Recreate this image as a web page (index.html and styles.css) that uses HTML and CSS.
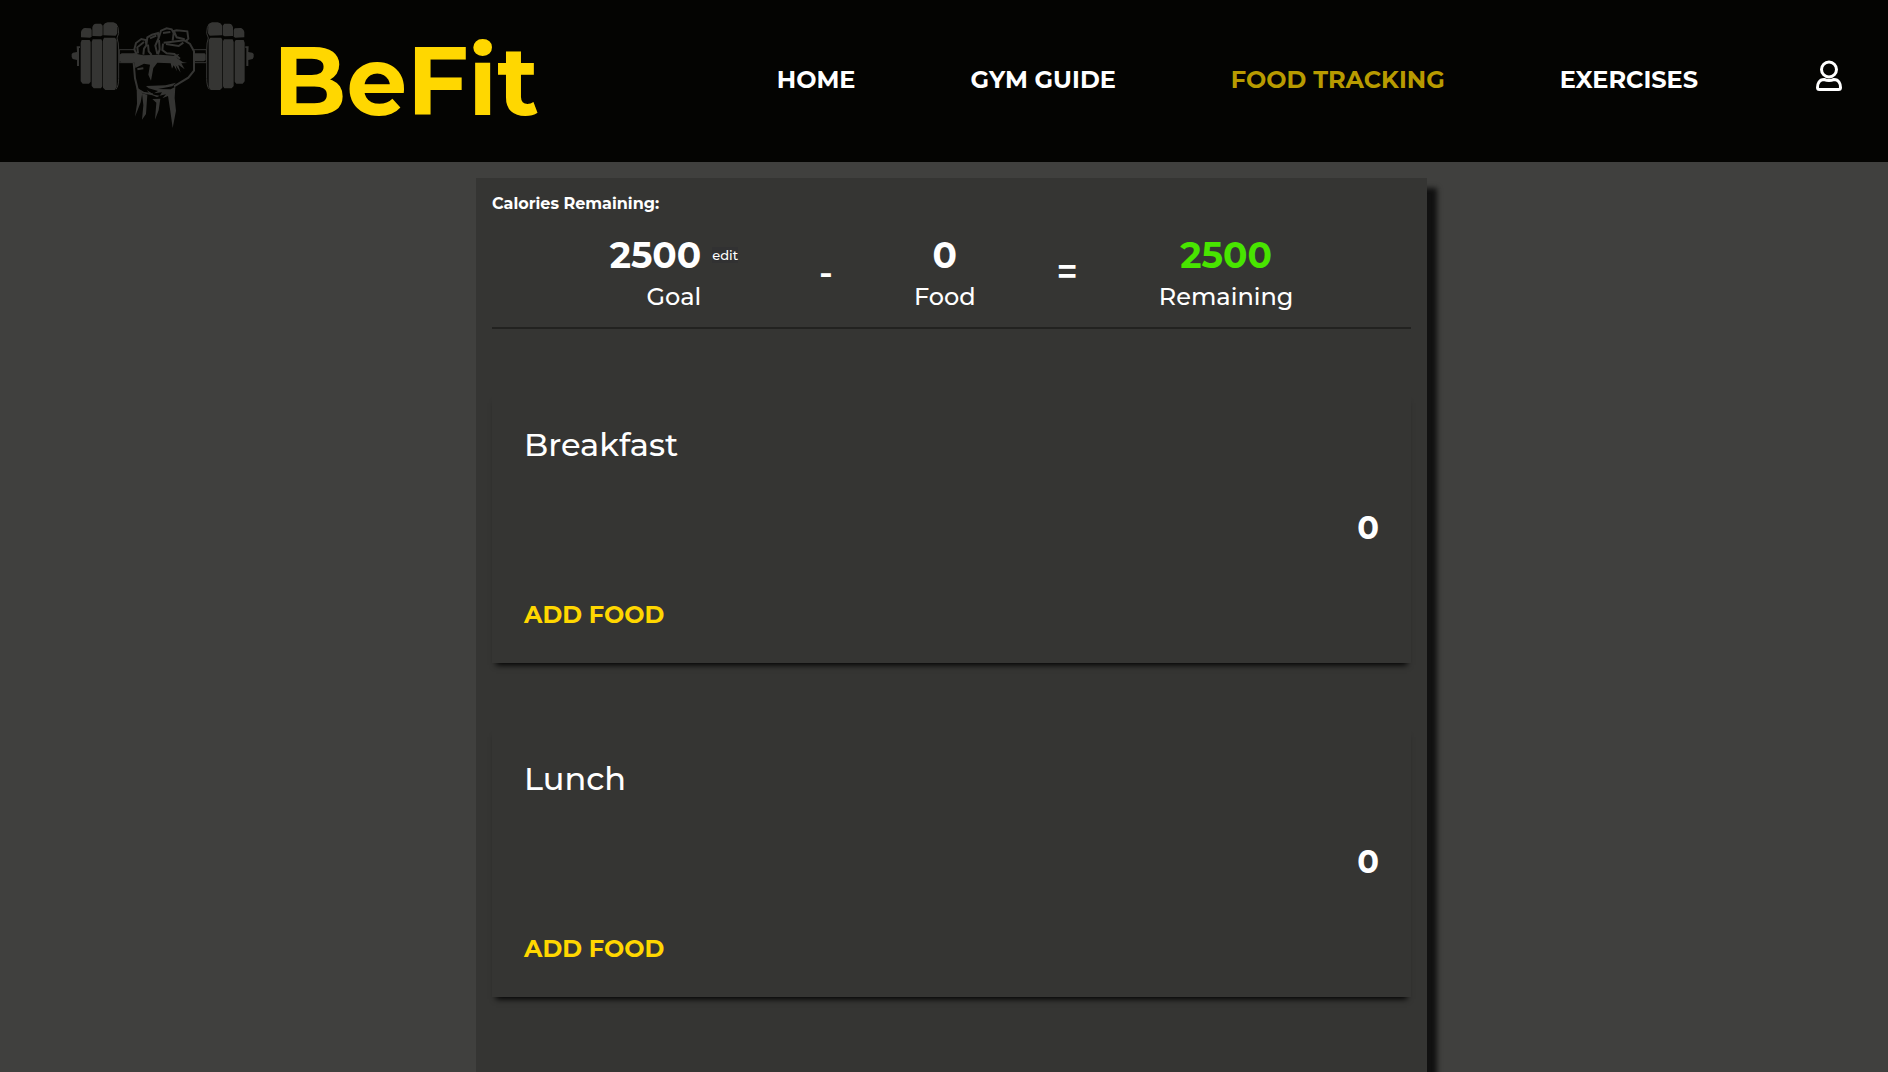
FILE: index.html
```html
<!DOCTYPE html>
<html lang="en">
<head>
<meta charset="utf-8">
<title>BeFit - Food Tracking</title>
<link rel="stylesheet" href="styles.css">
</head>
<body>
<header class="site-header">
  <a class="brand" href="#">
    <svg class="brand-mark" viewBox="0 0 600 375" aria-hidden="true">
      <defs>
        <g id="plates">
          <path d="M63 82V66Q66 55 75 54L92 55L95 60V80L90 83ZM97 78V52Q99 42 108 41H123L128 47V76L122 79ZM130 76V46Q133 38 143 37H160Q168 39 171 46L172 70L167 77Z"/>
          <path d="M65 90H89L92 96V215L87 221H68L62 214V98ZM98 88H124L127 94V229L123 235H101L95 228V96ZM132 83H165L170 90V231L164 240H136L129 233V90Z"/>
          <path class="thin" d="M168 41Q176 50 176 70L171 84Q176 96 176 120V205Q176 228 168 238"/>
          <path d="M50 109H60V114H57V168H51V150L38 147L35 141V132L39 128L51 126Z"/>
        </g>
      </defs>
      <use href="#plates"/>
      <use href="#plates" transform="matrix(-1 0 0 1 616 0)"/>
      <path class="thin" d="M178 119H226M402 119H439M178 119V158M439 119V158M402 158H439M178 158H220"/>
      <path d="M178 134L185 130H228V158H185L178 152ZM402 130H434L437 134V150L432 154H402Z"/>
      <path d="M220 130L250 136L300 134L340 137L358 131L350 143L368 156L382 159L364 160L374 178L355 164L362 188L347 166L351 184L341 166L336 176L332 160L292 158L280 174L273 212L265 194L270 164L252 161L226 174Z"/>
      <path class="line" d="M230 134L223 118L228 99L244 87L257 90L259 106L252 116L250 134M234 130L232 112L252 96M259 106L262 82L276 74L294 69L296 84L286 107L292 132M264 104L266 124L275 135M270 85L289 77M296 84L303 62L320 55L335 58L341 69L338 92M297 90L299 118L294 133M309 69L331 66M338 64L350 61L382 64L385 86L378 93M343 66L350 82L374 88"/>
      <path class="line" d="M311 98L338 95L373 91L390 102L402 124V182L385 203L342 229M309 101L307 120L320 130L343 132L360 146M318 102L356 108L370 98M221 158L225 205L233 238L250 248L278 253M232 178L250 175"/>
      <path d="M258 228L316 226L348 218L337 229L294 237L332 238L346 230L344 264L348 302L338 354L331 304L324 258L307 265L318 253L299 257L306 247L282 250L294 243L266 235Z"/>
      <path d="M230 230L247 249L242 277L225 320L231 281ZM246 250L262 254L258 312L246 329L250 286ZM260 240L282 254L299 257L291 262L269 252ZM277 267L301 266L296 301L285 329L289 278Z"/>
    </svg>
    <span class="brand-name">BeFit</span>
  </a>
  <nav class="site-nav" aria-label="Main">
    <a href="#">HOME</a>
    <a href="#">GYM GUIDE</a>
    <a class="active" href="#" aria-current="page">FOOD TRACKING</a>
    <a href="#">EXERCISES</a>
    <a class="account" href="#" aria-label="Account">
      <svg viewBox="0 0 56 64" aria-hidden="true">
        <circle cx="28" cy="19" r="15"/>
        <path d="M18 39Q28 43 38 39C48 39 51 48 51 55Q51 59 47 59H9Q5 59 5 55C5 48 8 39 18 39Z"/>
      </svg>
    </a>
  </nav>
</header>
<main class="page">
  <div class="panel">
    <h1 class="panel-title">Calories Remaining:</h1>
    <section class="summary">
      <div class="stat">
        <div class="stat-row"><span class="value">2500</span><button class="edit" type="button">edit</button></div>
        <span class="label">Goal</span>
      </div>
      <span class="operator">-</span>
      <div class="stat"><span class="value">0</span><span class="label">Food</span></div>
      <span class="operator">=</span>
      <div class="stat"><span class="value remaining">2500</span><span class="label">Remaining</span></div>
    </section>
    <section class="meal">
      <h2>Breakfast</h2>
      <p class="meal-total">0</p>
      <button class="add-food" type="button">ADD FOOD</button>
    </section>
    <section class="meal">
      <h2>Lunch</h2>
      <p class="meal-total">0</p>
      <button class="add-food" type="button">ADD FOOD</button>
    </section>
  </div>
</main>
</body>
</html>
```
FILE: styles.css
```css
* { box-sizing: border-box; }
body {
  margin: 0;
  min-height: 100vh;
  display: flex;
  flex-direction: column;
  background: #40403e;
  color: #fff;
  font-family: Montserrat, Inter, sans-serif;
}
a { color: inherit; text-decoration: none; }
button { border: 0; padding: 0; font-family: inherit; }
.site-header {
  display: flex;
  align-items: center;
  justify-content: space-between;
  padding: 10px 45px 11px 60px;
  background: #040402;
}
.brand { display: flex; align-items: center; gap: 13px; color: #353533; }
.brand-mark { width: 200px; height: 125px; margin-bottom: 16px; fill: currentColor; }
.brand-mark .line { fill: none; stroke: currentColor; stroke-width: 6; }
.brand-mark .thin { fill: none; stroke: currentColor; stroke-width: 3; }
.brand-name { font-size: 96px; line-height: 120px; font-weight: 700; color: #ffd700; }
.site-nav { display: flex; align-items: center; gap: 115px; margin-bottom: 2px; font-size: 24px; line-height: 28px; font-weight: 700; }
.active { color: #b89b00; }
.account { margin: 0 0 8px 2px; }
.account svg { display: block; width: 28px; height: 32px; fill: none; stroke: #fff; stroke-width: 6; }
.page { flex: 1; display: flex; padding: 16px 0 0 15px; justify-content: center; }
.panel {
  width: 951px;
  max-width: 100%;
  padding: 16px 16px 64px;
  background: #353533;
  box-shadow: 10px 10px 5px #111;
}
.panel-title { margin: 0; font-size: 16px; line-height: 20px; font-weight: 700; }
.summary {
  display: flex;
  justify-content: center;
  align-items: center;
  gap: 81px;
  padding: 19px 0 15px;
  border-bottom: 2px solid #222220;
}
.stat { display: flex; flex-direction: column; align-items: center; gap: 5px; }
.stat-row { display: flex; align-items: center; gap: 11px; }
.value { font-size: 36px; line-height: 44px; font-weight: 700; }
.remaining { color: #48e500; }
.label { font-size: 24px; line-height: 30px; font-weight: 500; }
.edit { background: #313132; color: #fff; font-size: 13px; line-height: 16px; font-weight: 500; }
.operator { margin-bottom: 2px; font-size: 36px; line-height: 44px; font-weight: 600; }
.meal {
  display: flex;
  flex-direction: column;
  margin-top: 64px;
  padding: 32px 32px 30px;
  background: #353533;
  box-shadow: 0 6px 6px -4px #000;
}
.meal h2 { margin: 0; font-size: 32px; line-height: 40px; font-weight: 500; }
.meal-total { margin: 43px 0 49px; align-self: flex-end; font-size: 32px; line-height: 40px; font-weight: 700; }
.add-food { align-self: flex-start; background: none; color: #ffd700; font-size: 24px; line-height: 36px; font-weight: 700; }
```
